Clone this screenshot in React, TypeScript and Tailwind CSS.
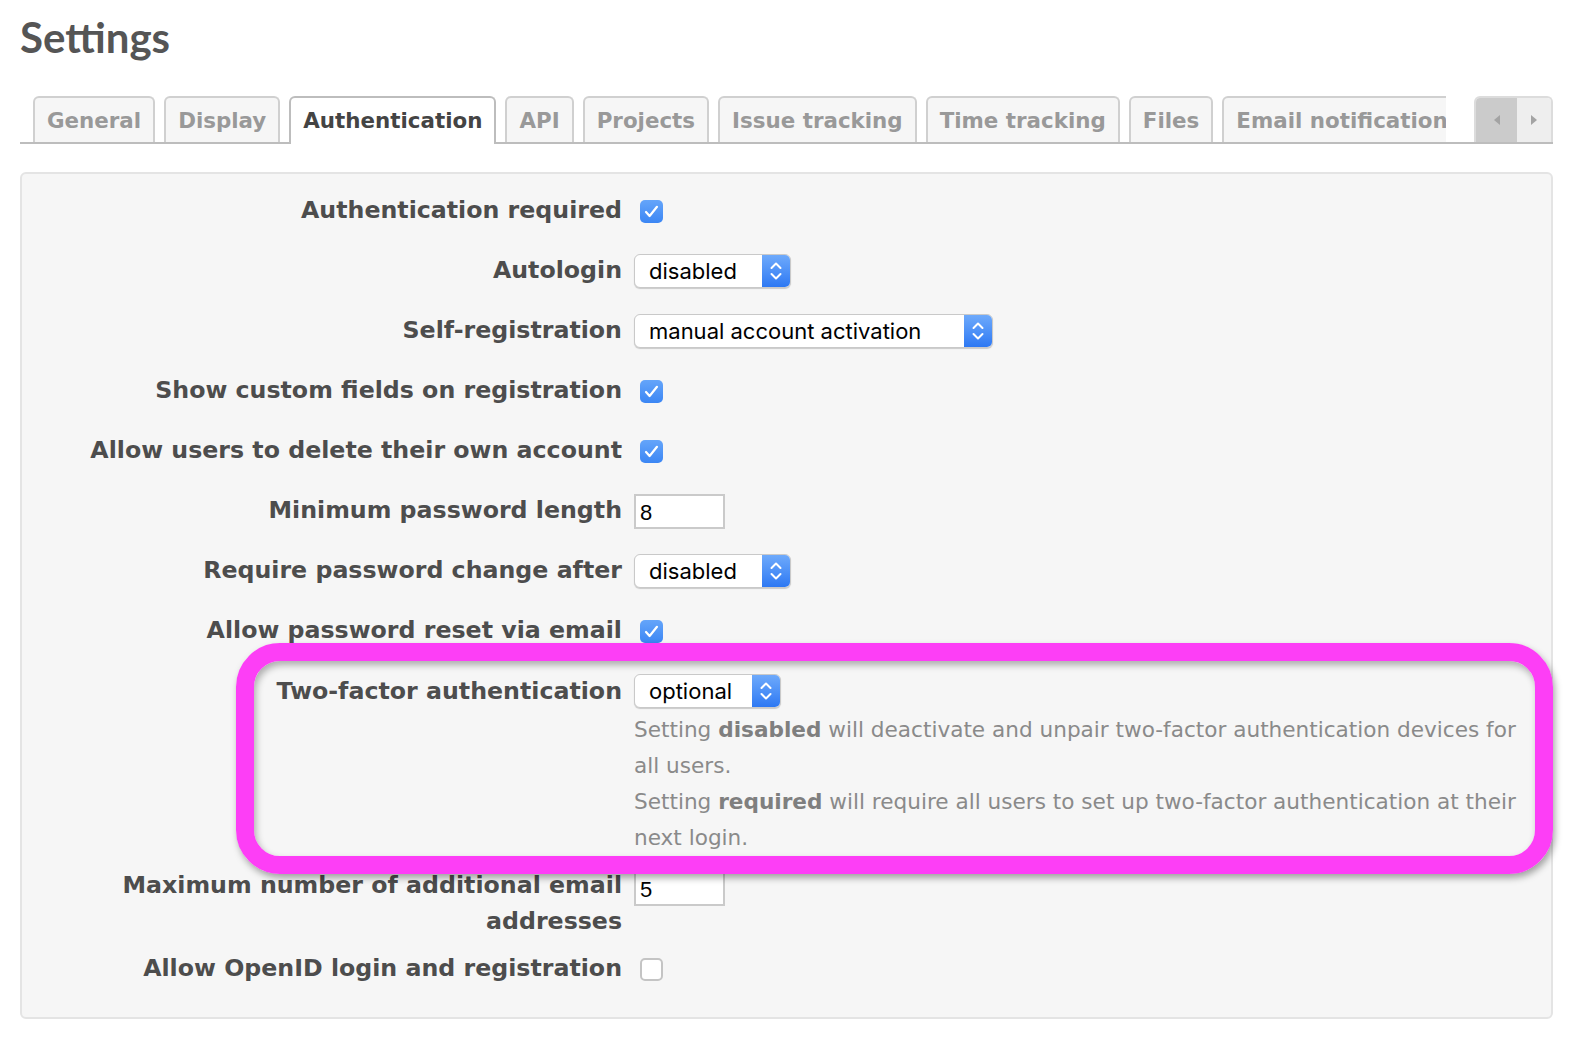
import React from 'react'

const tabs = [
  'General',
  'Display',
  'Authentication',
  'API',
  'Projects',
  'Issue tracking',
  'Time tracking',
  'Files',
  'Email notification',
]

function Checkbox({ checked }: { checked: boolean }) {
  if (!checked) {
    return <span className="block w-[23px] h-[23px] ml-[6px] rounded-[5px] border-2 border-[#c4c4c4] bg-white" />
  }
  return (
    <span className="flex items-center justify-center w-[23px] h-[23px] ml-[6px] rounded-[5px] bg-gradient-to-b from-[#65a5fa] to-[#3b86f4]">
      <svg width="15" height="13" viewBox="0 0 15 13" fill="none">
        <path d="M2 7 L5.6 11 L13 1.8" stroke="white" strokeWidth="2.2" strokeLinecap="round" strokeLinejoin="round" />
      </svg>
    </span>
  )
}

function Select({ value, width }: { value: string; width: string }) {
  return (
    <div className={`flex h-[34px] ${width} rounded-[6px] bg-white border border-[#c9c9c9] shadow-[0_1px_1px_rgba(0,0,0,0.18)] overflow-hidden`}>
      <span className="flex-1 pl-[14px] leading-[32px] text-[22px] font-normal text-black font-['Inter',sans-serif]">{value}</span>
      <span className="flex items-center justify-center w-[28px] bg-gradient-to-b from-[#6eaafb] to-[#2d78f3]">
        <svg width="14" height="22" viewBox="0 0 14 22" fill="none">
          <path d="M2.5 8 L7 3.5 L11.5 8" stroke="white" strokeWidth="2" strokeLinecap="round" strokeLinejoin="round" />
          <path d="M2.5 14 L7 18.5 L11.5 14" stroke="white" strokeWidth="2" strokeLinecap="round" strokeLinejoin="round" />
        </svg>
      </span>
    </div>
  )
}

function TextInput({ value }: { value: string }) {
  return (
    <div className="w-[91px] h-[35px] bg-white border-2 border-[#cacaca] pl-[4px] leading-[33px] text-[22px] font-normal text-black font-['Liberation_Sans',sans-serif]">
      {value}
    </div>
  )
}

function Row({ label, children }: { label: string; children: React.ReactNode }) {
  return (
    <div className="grid grid-cols-[600px_1fr] gap-x-[12px] h-[60px] items-center">
      <span className="text-right">{label}</span>
      <div className="flex items-center">{children}</div>
    </div>
  )
}

export default function App() {
  return (
    <div className="relative w-[1570px] h-[1046px] bg-white pl-[20px] pt-[12px] overflow-hidden">
      <h2 className="text-[42px] leading-[50px] font-bold text-[#555] font-['Lato',sans-serif]">Settings</h2>

      <div className="flex items-end mt-[34px] h-[48px] w-[1533px] border-b-2 border-[#bdbdbd] font-['DejaVu_Sans',sans-serif]">
        <div className="flex items-end gap-[9px] w-[1426px] pl-[13px] overflow-hidden self-stretch -mb-[2px]">
          {tabs.map((t) =>
            t === 'Authentication' ? (
              <div
                key={t}
                className="shrink-0 h-[48px] px-[12px] pt-[1px] flex items-center bg-white border-2 border-b-0 border-[#bdbdbd] rounded-t-[6px] text-[21.4px] font-bold text-[#444]"
              >
                {t}
              </div>
            ) : (
              <div
                key={t}
                className="shrink-0 h-[46px] mb-[2px] px-[12px] pt-[3px] flex items-center bg-[#f6f6f6] border-2 border-b-0 border-[#d0d0d0] rounded-t-[6px] text-[21.4px] font-bold text-[#999]"
              >
                {t}
              </div>
            )
          )}
        </div>
        <div className="ml-auto flex h-[46px] rounded-t-[6px] overflow-hidden border-2 border-b-0 border-[#dcdcdc]">
          <span className="flex items-center justify-center w-[41px] bg-[#cbcbcb]">
            <svg width="8" height="12" viewBox="0 0 8 12">
              <path d="M7 1 L1 6 L7 11 Z" fill="#a3a3a3" />
            </svg>
          </span>
          <span className="flex items-center justify-center w-[34px] bg-[#eeeeee]">
            <svg width="8" height="12" viewBox="0 0 8 12">
              <path d="M1 1 L7 6 L1 11 Z" fill="#a3a3a3" />
            </svg>
          </span>
        </div>
      </div>

      <div className="mt-[28px] w-[1533px] bg-[#f6f6f6] border-2 border-[#e4e4e4] rounded-[6px] pt-[7px] pb-[18px] text-[23.7px] font-bold text-[#4d4d4d] font-['DejaVu_Sans',sans-serif]">
        <Row label="Authentication required">
          <Checkbox checked />
        </Row>
        <Row label="Autologin">
          <Select value="disabled" width="w-[157px]" />
        </Row>
        <Row label="Self-registration">
          <Select value="manual account activation" width="w-[359px]" />
        </Row>
        <Row label="Show custom fields on registration">
          <Checkbox checked />
        </Row>
        <Row label="Allow users to delete their own account">
          <Checkbox checked />
        </Row>
        <Row label="Minimum password length">
          <TextInput value="8" />
        </Row>
        <Row label="Require password change after">
          <Select value="disabled" width="w-[157px]" />
        </Row>
        <Row label="Allow password reset via email">
          <Checkbox checked />
        </Row>

        <div className="grid grid-cols-[600px_1fr] gap-x-[12px] pt-[13px]">
          <span className="text-right leading-[34px]">Two-factor authentication</span>
          <div>
            <Select value="optional" width="w-[147px]" />
            <div className="mt-[4px] w-[900px] text-[21.6px] leading-[36px] font-normal text-[#8a8a8a]">
              <p>
                Setting <b className="font-bold text-[#7f7f7f]">disabled</b> will deactivate and unpair two-factor authentication devices for all users.
              </p>
              <p>
                Setting <b className="font-bold text-[#7f7f7f]">required</b> will require all users to set up two-factor authentication at their next login.
              </p>
            </div>
          </div>
        </div>

        <div className="grid grid-cols-[600px_1fr] gap-x-[12px] mt-[11px]">
          <span className="text-right leading-[36px]">Maximum number of additional email addresses</span>
          <div className="pt-[4px]">
            <TextInput value="5" />
          </div>
        </div>
        <Row label="Allow OpenID login and registration">
          <Checkbox checked={false} />
        </Row>
      </div>

      <div className="absolute left-[236px] top-[643px] w-[1317px] h-[231px] rounded-[44px] border-[18px] border-[#fd3ef6] shadow-[2px_4px_7px_rgba(0,0,0,0.35),inset_2px_4px_7px_rgba(0,0,0,0.3)]" />
    </div>
  )
}
